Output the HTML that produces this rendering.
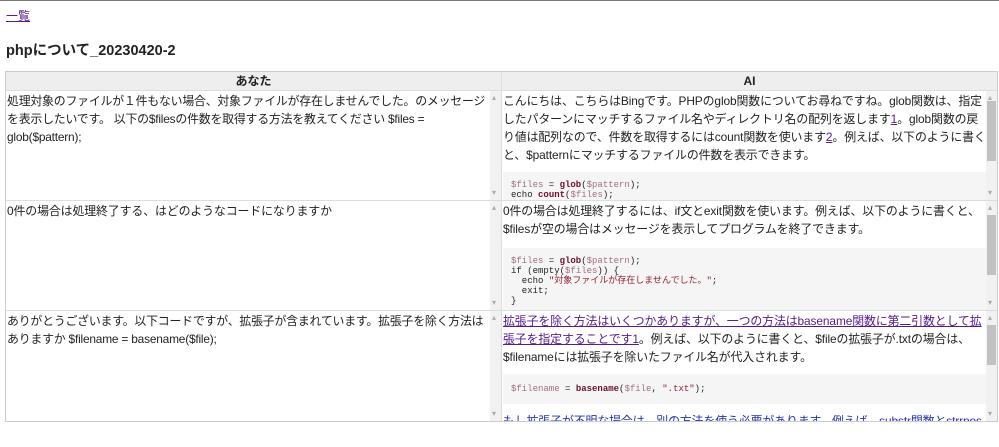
<!DOCTYPE html>
<html><head><meta charset="utf-8"><style>
body{margin:0;width:999px;height:447px;overflow:hidden;background:#fff;font-family:"Liberation Sans","Noto Sans CJK JP",sans-serif;color:#222;border-top:1px solid #777;box-sizing:border-box;position:relative}
a{color:#551a8b}
.lnk{position:absolute;left:6px;top:6px;font-size:12px}
h1{position:absolute;left:6px;top:38px;margin:0;font-size:14.5px;font-weight:bold}
.tbl{position:absolute;left:5px;top:70px;width:993px;height:351px;border:1px solid #ccc;box-sizing:border-box;background:#ddd}
.hd{position:absolute;top:0;height:18px;background:#eee;font-size:12px;font-weight:bold;text-align:center;line-height:18px}
.cell{position:absolute;background:#fff;overflow:hidden;font-size:11.9px;line-height:18px;letter-spacing:-0.1px}
.txt{position:absolute;left:1px;top:1px;right:10px}
.sb{position:absolute;right:0;top:0;bottom:0;width:11px;background:#f1f1f1}
.sb:before{content:"▴";position:absolute;top:-2px;left:2px;font-size:8px;color:#aaa}
.sb:after{content:"▾";position:absolute;bottom:-2px;left:2px;font-size:8px;color:#aaa}
.th{position:absolute;left:1px;width:9px;background:#c1c1c1}
pre{margin:8px 0 0;background:#f5f5f5;padding:8px 8px 4px;font-family:"Liberation Mono","Noto Sans CJK JP",monospace;font-size:9px;line-height:10px;color:#222;letter-spacing:0}
.v{color:#a07080}.f{color:#6a1030;font-weight:bold}.s{color:#902030}
</style></head><body>
<a class="lnk" href="#">一覧</a>
<h1>phpについて_20230420-2</h1>
<div class="tbl">
<div class="hd" style="left:0;width:495px">あなた</div>
<div class="hd" style="left:496px;width:495px">AI</div>

<div class="cell" style="left:0;top:19px;width:495px;height:109px"><div class="txt" style="letter-spacing:-0.2px;right:8px">処理対象のファイルが１件もない場合、対象ファイルが存在しませんでした。のメッセージを表示したいです。 以下の$filesの件数を取得する方法を教えてください $files = glob($pattern);</div><div class="sb"></div></div>
<div class="cell" style="left:496px;top:19px;width:495px;height:109px"><div class="txt">こんにちは、こちらはBingです。PHPのglob関数についてお尋ねですね。glob関数は、指定したパターンにマッチするファイル名やディレクトリ名の配列を返します<a href="#">1</a>。glob関数の戻り値は配列なので、件数を取得するにはcount関数を使います<a href="#">2</a>。例えば、以下のように書くと、$patternにマッチするファイルの件数を表示できます。<pre><span class="v">$files</span> = <span class="f">glob</span>(<span class="v">$pattern</span>);
echo <span class="f">count</span>(<span class="v">$files</span>);</pre></div><div class="sb"><div class="th" style="top:10px;height:60px"></div></div></div>

<div class="cell" style="left:0;top:129px;width:495px;height:109px"><div class="txt">0件の場合は処理終了する、はどのようなコードになりますか</div><div class="sb"></div></div>
<div class="cell" style="left:496px;top:129px;width:495px;height:109px"><div class="txt">0件の場合は処理終了するには、if文とexit関数を使います。例えば、以下のように書くと、$filesが空の場合はメッセージを表示してプログラムを終了できます。<pre style="margin-top:10px"><span class="v">$files</span> = <span class="f">glob</span>(<span class="v">$pattern</span>);
if (empty(<span class="v">$files</span>)) {
  echo <span class="s">"対象ファイルが存在しませんでした。"</span>;
  exit;
}</pre></div><div class="sb"><div class="th" style="top:14px;height:60px"></div></div></div>

<div class="cell" style="left:0;top:239px;width:495px;height:110px"><div class="txt" style="letter-spacing:-0.2px;right:8px">ありがとうございます。以下コードですが、拡張子が含まれています。拡張子を除く方法はありますか $filename = basename($file);</div><div class="sb"></div></div>
<div class="cell" style="left:496px;top:239px;width:495px;height:110px"><div class="txt"><a href="#">拡張子を除く方法はいくつかありますが、一つの方法はbasename関数に第二引数として拡張子を指定することです1</a>。例えば、以下のように書くと、$fileの拡張子が.txtの場合は、$filenameには拡張子を除いたファイル名が代入されます。<pre style="padding:10px 8px"><span class="v">$filename</span> = <span class="f">basename</span>(<span class="v">$file</span>, <span class="s">".txt"</span>);</pre><div style="color:#2233aa;margin-top:8px">もし拡張子が不明な場合は、別の方法を使う必要があります。例えば、substr関数とstrrpos</div></div><div class="sb"><div class="th" style="top:14px;height:40px"></div></div></div>
</div>
</body></html>
